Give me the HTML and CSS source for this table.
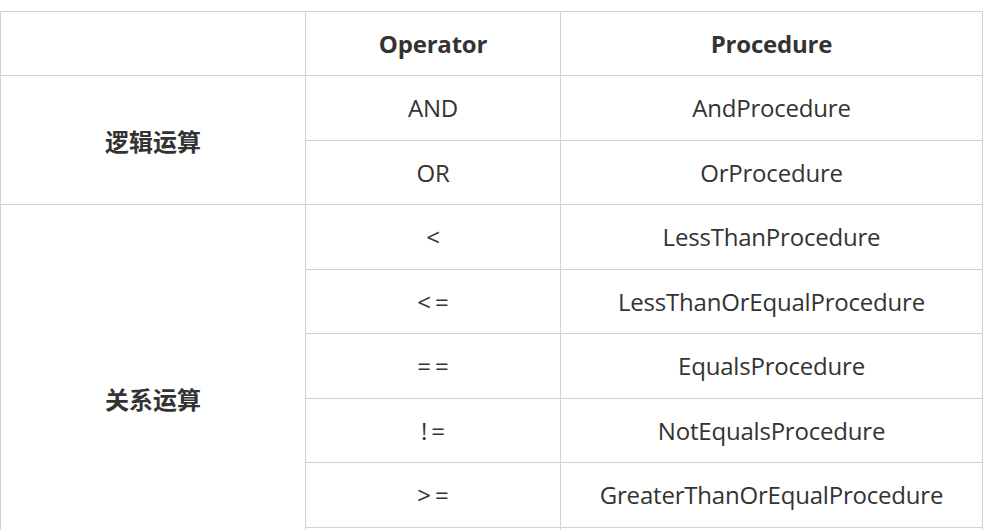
FILE: index.html
```html
<!DOCTYPE html>
<html lang="zh">
<head>
<meta charset="utf-8">
<link rel="stylesheet" href="styles.css">
</head>
<body>
<table class="ops">
  <colgroup>
    <col class="c1"><col class="c2"><col class="c3">
  </colgroup>
  <thead>
    <tr class="head"><th></th><th>Operator</th><th>Procedure</th></tr>
  </thead>
  <tbody>
    <tr><td rowspan="2" class="group">逻辑运算</td><td>AND</td><td>AndProcedure</td></tr>
    <tr><td>OR</td><td>OrProcedure</td></tr>
    <tr><td rowspan="6" class="group">关系运算</td><td class="sym">&lt;</td><td>LessThanProcedure</td></tr>
    <tr><td class="sym">&lt;=</td><td>LessThanOrEqualProcedure</td></tr>
    <tr><td class="sym">==</td><td>EqualsProcedure</td></tr>
    <tr><td class="sym">!=</td><td>NotEqualsProcedure</td></tr>
    <tr><td class="sym">&gt;=</td><td>GreaterThanOrEqualProcedure</td></tr>
    <tr><td></td><td></td></tr>
  </tbody>
</table>
</body>
</html>
```
FILE: styles.css
```css
html, body {
  margin: 0;
  padding: 0;
  background: #ffffff;
}
body {
  padding-top: 11px;
  font-family: "Open Sans", "Noto Sans CJK SC", sans-serif;
  color: #333333;
}
.ops {
  border-collapse: collapse;
  table-layout: fixed;
  width: 982px;
  font-size: 24px;
}
.c1 { width: 305px; }
.c2 { width: 255px; }
.c3 { width: 422px; }
.ops tr {
  height: 64.5px;
}
.ops tr.head {
  height: 64px;
}
.ops th, .ops td {
  border: 1px solid #d2d2d2;
  padding: 0;
  text-align: center;
  vertical-align: middle;
  letter-spacing: -0.2px;
}
.ops th {
  font-weight: 700;
}
.ops td.sym {
  letter-spacing: 4px;
  text-indent: 4px;
}
.ops td.group {
  font-family: "Noto Sans CJK SC", sans-serif;
  font-weight: 700;
  letter-spacing: 0;
}
```
